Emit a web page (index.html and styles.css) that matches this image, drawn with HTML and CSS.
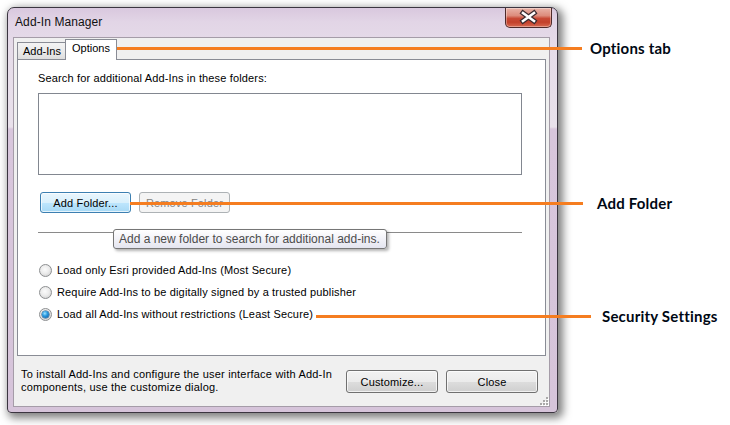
FILE: index.html
```html
<!DOCTYPE html>
<html>
<head>
<meta charset="utf-8">
<title>Add-In Manager</title>
<link rel="stylesheet" href="styles.css">
</head>
<body>
<div class="canvas">
  <div class="window">
    <div class="titlebar">
      <span class="title">Add-In Manager</span>
      <div class="close-btn">
        <svg width="45" height="19" viewBox="0 0 45 19">
          <path d="M17 5 L28 13 M28 5 L17 13" stroke="#3a2a2e" stroke-width="5" stroke-linecap="square" fill="none"/>
          <path d="M17 5 L28 13 M28 5 L17 13" stroke="#ffffff" stroke-width="2.6" stroke-linecap="square" fill="none"/>
        </svg>
      </div>
    </div>
    <div class="client">
      <div class="tabs">
        <div class="tab">Add-Ins</div>
        <div class="tab active">Options</div>
      </div>
      <div class="panel">
        <div class="panel-label">Search for additional Add-Ins in these folders:</div>
        <div class="listbox"></div>
        <div class="btn-row">
          <button class="btn btn-hot">Add Folder...</button>
          <button class="btn btn-disabled">Remove Folder</button>
        </div>
        <div class="separator"></div>
        <div class="radios">
          <div class="radio-row"><span class="radio"></span><span>Load only Esri provided Add-Ins (Most Secure)</span></div>
          <div class="radio-row"><span class="radio"></span><span>Require Add-Ins to be digitally signed by a trusted publisher</span></div>
          <div class="radio-row"><span class="radio checked"></span><span>Load all Add-Ins without restrictions (Least Secure)</span></div>
        </div>
      </div>
      <div class="footer">
        <div class="footer-text">To install Add-Ins and configure the user interface with Add-In<br>components, use the customize dialog.</div>
        <div class="footer-btns">
          <button class="btn btn-wide">Customize...</button>
          <button class="btn btn-wide">Close</button>
        </div>
      </div>
      <svg class="grip" width="10" height="10" viewBox="0 0 10 10">
        <g fill="#ffffff">
          <rect x="8" y="2" width="2" height="2"/>
          <rect x="5" y="5" width="2" height="2"/><rect x="8" y="5" width="2" height="2"/>
          <rect x="2" y="8" width="2" height="2"/><rect x="5" y="8" width="2" height="2"/><rect x="8" y="8" width="2" height="2"/>
        </g>
        <g fill="#a9a9a9">
          <rect x="7" y="1" width="2" height="2"/>
          <rect x="4" y="4" width="2" height="2"/><rect x="7" y="4" width="2" height="2"/>
          <rect x="1" y="7" width="2" height="2"/><rect x="4" y="7" width="2" height="2"/><rect x="7" y="7" width="2" height="2"/>
        </g>
      </svg>
    </div>
  </div>

  <div class="tooltip">Add a new folder to search for additional add-ins.</div>

  <div class="callout callout-tab">
    <span class="callout-line"></span>
    <span class="callout-label">Options tab</span>
  </div>
  <div class="callout callout-folder">
    <span class="callout-line"></span>
    <span class="callout-label">Add Folder</span>
  </div>
  <div class="callout callout-security">
    <span class="callout-line"></span>
    <span class="callout-label">Security Settings</span>
  </div>
</div>
</body>
</html>
```

FILE: styles.css
```css
* { box-sizing: border-box; }

html, body {
  margin: 0;
  padding: 0;
}

body {
  background: #ffffff;
  font-family: "Liberation Sans", Arial, sans-serif;
  font-size: 11px;
  letter-spacing: 0.15px;
  color: #000;
}

.canvas {
  position: relative;
  width: 730px;
  height: 425px;
  overflow: hidden;
  padding: 7px 0 0 7px;
}

/* ---------- window frame ---------- */
.window {
  width: 551px;
  height: 406px;
  border: 1px solid #3b3540;
  border-radius: 7px 7px 4px 4px;
  background: linear-gradient(180deg, #d9c8de 0px, #e2d5e6 14px, #e6dce9 40px, #e9e1eb 119px, #d8c6dc 121px, #d6c4da 100%);
  box-shadow: 3px 3px 9px 2px rgba(0, 0, 0, 0.5);
  padding: 0 7px 5px 5px;
  display: flex;
  flex-direction: column;
}

.titlebar {
  height: 29px;
  display: flex;
  align-items: flex-start;
  flex-shrink: 0;
}

.title {
  font-family: "Liberation Sans", Arial, sans-serif;
  font-size: 12px;
  letter-spacing: 0.1px;
  line-height: 15px;
  margin: 7px 0 0 2px;
  color: #111;
}

.close-btn {
  margin-left: auto;
  margin-right: -2px;
  width: 47px;
  height: 20px;
  border: 1px solid #4e2a2a;
  border-top: none;
  border-radius: 0 0 5px 5px;
  background: linear-gradient(180deg, #e9b3a8 0%, #dd8c7c 40%, #c84a36 55%, #c2402b 75%, #d86a52 100%);
  box-shadow: inset 0 0 0 1px rgba(255, 255, 255, 0.35);
  display: flex;
  align-items: center;
  justify-content: center;
}

.close-btn svg { display: block; }

/* ---------- client area ---------- */
.client {
  flex: 1;
  position: relative;
  border: 1px solid #a59ca8;
  background: #f0f0f0;
  display: flex;
  flex-direction: column;
}

.tabs {
  height: 20px;
  margin: 1px 3px 0;
  display: flex;
  align-items: flex-end;
  flex-shrink: 0;
}

.tab {
  border: 1px solid #898c95;
  border-bottom: none;
  text-align: center;
  line-height: 16px;
  letter-spacing: 0;
}

.tab:first-child {
  width: 49px;
  height: 17px;
  background: linear-gradient(180deg, #f3f3f3 0%, #ebebeb 50%, #dedede 100%);
  padding-left: 1px;
}

.tab.active {
  position: relative;
  z-index: 1;
  width: 52px;
  height: 21px;
  margin-left: -1px;
  margin-bottom: -1px;
  background: #ffffff;
  line-height: 17px;
}

.panel {
  height: 297px;
  border: 1px solid #898c95;
  background: #ffffff;
  margin: 0 3px;
  padding: 12px 23px 0 20px;
  flex-shrink: 0;
}

.panel-label {
  line-height: 13px;
  height: 13px;
}

.listbox {
  margin-top: 8px;
  height: 82px;
  border: 1px solid #828790;
  background: #ffffff;
}

.btn-row {
  margin-top: 17px;
  padding-left: 2px;
  display: flex;
  gap: 8px;
}

.btn {
  font-family: "Liberation Sans", Arial, sans-serif;
  font-size: 11px;
  letter-spacing: 0.15px;
  color: #000;
  padding: 0;
  width: 91px;
  height: 21px;
  border: 1px solid #707070;
  border-radius: 3px;
  background: linear-gradient(180deg, #f2f2f2 0%, #ebebeb 50%, #dddddd 51%, #cfcfcf 100%);
  box-shadow: inset 0 0 0 1px rgba(255, 255, 255, 0.7);
}

.btn-hot {
  border-color: #3c7fb1;
  background: linear-gradient(180deg, #eaf6fd 0%, #d9f0fc 50%, #bee6fd 51%, #a7d9f5 100%);
}

.btn-disabled {
  border-color: #adb2b5;
  background: #f4f4f4;
  color: #838383;
  box-shadow: none;
}

.btn-wide {
  width: 92px;
  height: 23px;
}

.separator {
  margin-top: 19px;
  height: 1px;
  background: #8a8a8a;
}

.radios {
  margin-top: 29px;
  padding-left: 1px;
  display: flex;
  flex-direction: column;
  gap: 6px;
}

.radio-row {
  height: 16px;
  display: flex;
  align-items: center;
  gap: 5px;
  line-height: 16px;
}

.radio {
  position: relative;
  width: 13px;
  height: 13px;
  border-radius: 50%;
  border: 1px solid #8d8f91;
  background: radial-gradient(circle at 45% 40%, #fbfbfb 0%, #ececec 45%, #c8c8c8 100%);
  flex-shrink: 0;
}

.radio.checked::after {
  content: "";
  position: absolute;
  left: 2px;
  top: 2px;
  width: 7px;
  height: 7px;
  border-radius: 50%;
  background: radial-gradient(circle at 40% 35%, #9fe3ff 0%, #2a9ae0 40%, #0c4f94 100%);
  box-shadow: 0 0 0 0.5px #1b4f7a;
}

/* ---------- footer ---------- */
.footer {
  flex: 1;
  padding: 12px 11px 0 7px;
  display: flex;
  justify-content: space-between;
  align-items: flex-start;
}

.footer-text {
  line-height: 13px;
  white-space: nowrap;
  letter-spacing: 0.2px;
}

.footer-btns {
  margin-top: 2px;
  display: flex;
  gap: 8px;
}

.grip {
  position: absolute;
  right: 0;
  bottom: 0;
  display: block;
}

/* ---------- tooltip ---------- */
.tooltip {
  position: absolute;
  left: 113px;
  top: 229px;
  width: 274px;
  height: 20px;
  padding-left: 5px;
  border: 1px solid #767676;
  border-radius: 3px;
  background: linear-gradient(180deg, #ffffff 0%, #e4e5f0 100%);
  box-shadow: 2px 2px 3px rgba(0, 0, 0, 0.3);
  color: #4c4c4c;
  font-size: 12px;
  letter-spacing: 0;
  line-height: 18px;
  white-space: nowrap;
}

/* ---------- callouts ---------- */
.callout {
  position: absolute;
  height: 20px;
  display: flex;
  align-items: center;
}

.callout-line {
  height: 3px;
  background: #f57d20;
}

.callout-label {
  font-family: Lato, "Open Sans", sans-serif;
  font-weight: bold;
  font-size: 15px;
  letter-spacing: 0.2px;
  color: #000814;
  white-space: nowrap;
}

.callout-tab { left: 113px; top: 38px; }
.callout-tab .callout-line { width: 469px; }
.callout-tab .callout-label { margin-left: 8px; }

.callout-folder { left: 130px; top: 193px; }
.callout-folder .callout-line { width: 453px; }
.callout-folder .callout-label { margin-left: 14px; }

.callout-security { left: 316px; top: 306px; }
.callout-security .callout-line { width: 275px; }
.callout-security .callout-label { margin-left: 11px; }
```
